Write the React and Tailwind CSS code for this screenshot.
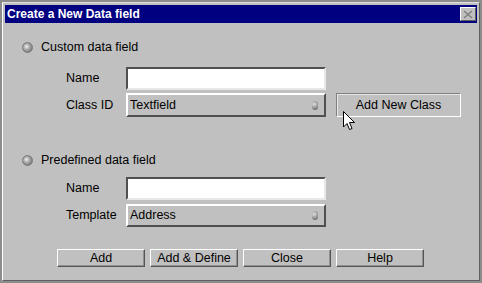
import React from 'react';

function Radio({ label }) {
  return (
    <div className="flex items-center h-4 ml-[19px]">
      <span className="w-[11px] h-[11px] rounded-full bg-[radial-gradient(circle_at_40%_40%,#f0f0f0_0%,#a8a8a8_40%,#5e5e5e_100%)] border border-[#7a7a7a]" />
      <span className="ml-[8px]">{label}</span>
    </div>
  );
}

function TextBox() {
  return (
    <div className="w-[200px] h-[23px] bg-white border-2 border-t-[#505050] border-l-[#505050] border-b-[#e8e8e8] border-r-[#e8e8e8]" />
  );
}

function Select({ value }) {
  return (
    <div className="w-[200px] h-full flex items-center justify-between bg-[#c0c0c0] border-2 border-t-white border-l-white border-b-[#505050] border-r-[#505050] pl-[2px] pr-[6px]">
      <span>{value}</span>
      <span className="w-[6px] h-[9px] rounded-full bg-[radial-gradient(circle_at_35%_35%,#e0e0e0_0%,#8c8c8c_60%,#5a5a5a_100%)]" />
    </div>
  );
}

function Btn({ children }) {
  return (
    <button className="w-[88px] h-[18px] flex items-center justify-center bg-[#c0c0c0] border border-t-white border-l-white border-b-[#555] border-r-[#555] shadow-[inset_-1px_-1px_0_#909090]">
      {children}
    </button>
  );
}

export default function App() {
  return (
    <div
      className="w-[482px] h-[283px] bg-[#c0c0c0] border-2 border-[#8c8c8c] text-[12.5px] text-black overflow-hidden relative"
      style={{ fontFamily: '"Liberation Sans", Arial, sans-serif' }}
    >
      <div className="h-full border border-t-[#e0e0e0] border-l-white border-b-[#606060] border-r-[#606060] flex flex-col">
        <div className="mx-[2px] mt-[2px] h-[18px] bg-[#000080] flex items-center justify-between pl-[2px] pr-[1px]">
          <span className="text-white font-bold text-[12px]">Create a New Data field</span>
          <span className="w-[16px] h-[14px] bg-[#c0c0c0] border border-t-white border-l-white border-b-[#606060] border-r-[#606060] flex items-center justify-center">
            <svg width="10" height="9" viewBox="0 0 10 9">
              <path d="M1 1 L9 8 M9 1 L1 8" stroke="#808080" strokeWidth="1.6" />
            </svg>
          </span>
        </div>

        <div className="mt-[16px]">
          <Radio label="Custom data field" />
        </div>
        <div className="flex items-center pl-[63px] mt-[12px] h-[23px]">
          <span className="w-[60px]">Name</span>
          <TextBox />
        </div>
        <div className="flex items-center pl-[63px] mt-[3px] h-[24px]">
          <span className="w-[60px]">Class ID</span>
          <Select value="Textfield" />
          <button className="ml-[10px] w-[125px] h-[24px] flex items-center justify-center border border-t-[#808080] border-l-[#808080] border-b-white border-r-white shadow-[inset_1px_1px_0_#e8e8e8]">
            Add New Class
          </button>
        </div>

        <div className="mt-[35px]">
          <Radio label="Predefined data field" />
        </div>
        <div className="flex items-center pl-[63px] mt-[9px] h-[23px]">
          <span className="w-[60px]">Name</span>
          <TextBox />
        </div>
        <div className="flex items-center pl-[63px] mt-[4px] h-[23px]">
          <span className="w-[60px]">Template</span>
          <Select value="Address" />
        </div>

        <div className="flex gap-[5px] pl-[54px] mt-[22px]">
          <Btn>Add</Btn>
          <Btn>Add &amp; Define</Btn>
          <Btn>Close</Btn>
          <Btn>Help</Btn>
        </div>
      </div>

      <svg className="absolute left-[340px] top-[108px]" width="14" height="22" viewBox="0 0 14 22">
        <path d="M1.5 1.5 L1.5 17 L5 13.5 L7.5 19.5 L10 18.5 L7.5 12.5 L12.5 12.5 Z" fill="white" stroke="black" strokeWidth="1" />
      </svg>
    </div>
  );
}
